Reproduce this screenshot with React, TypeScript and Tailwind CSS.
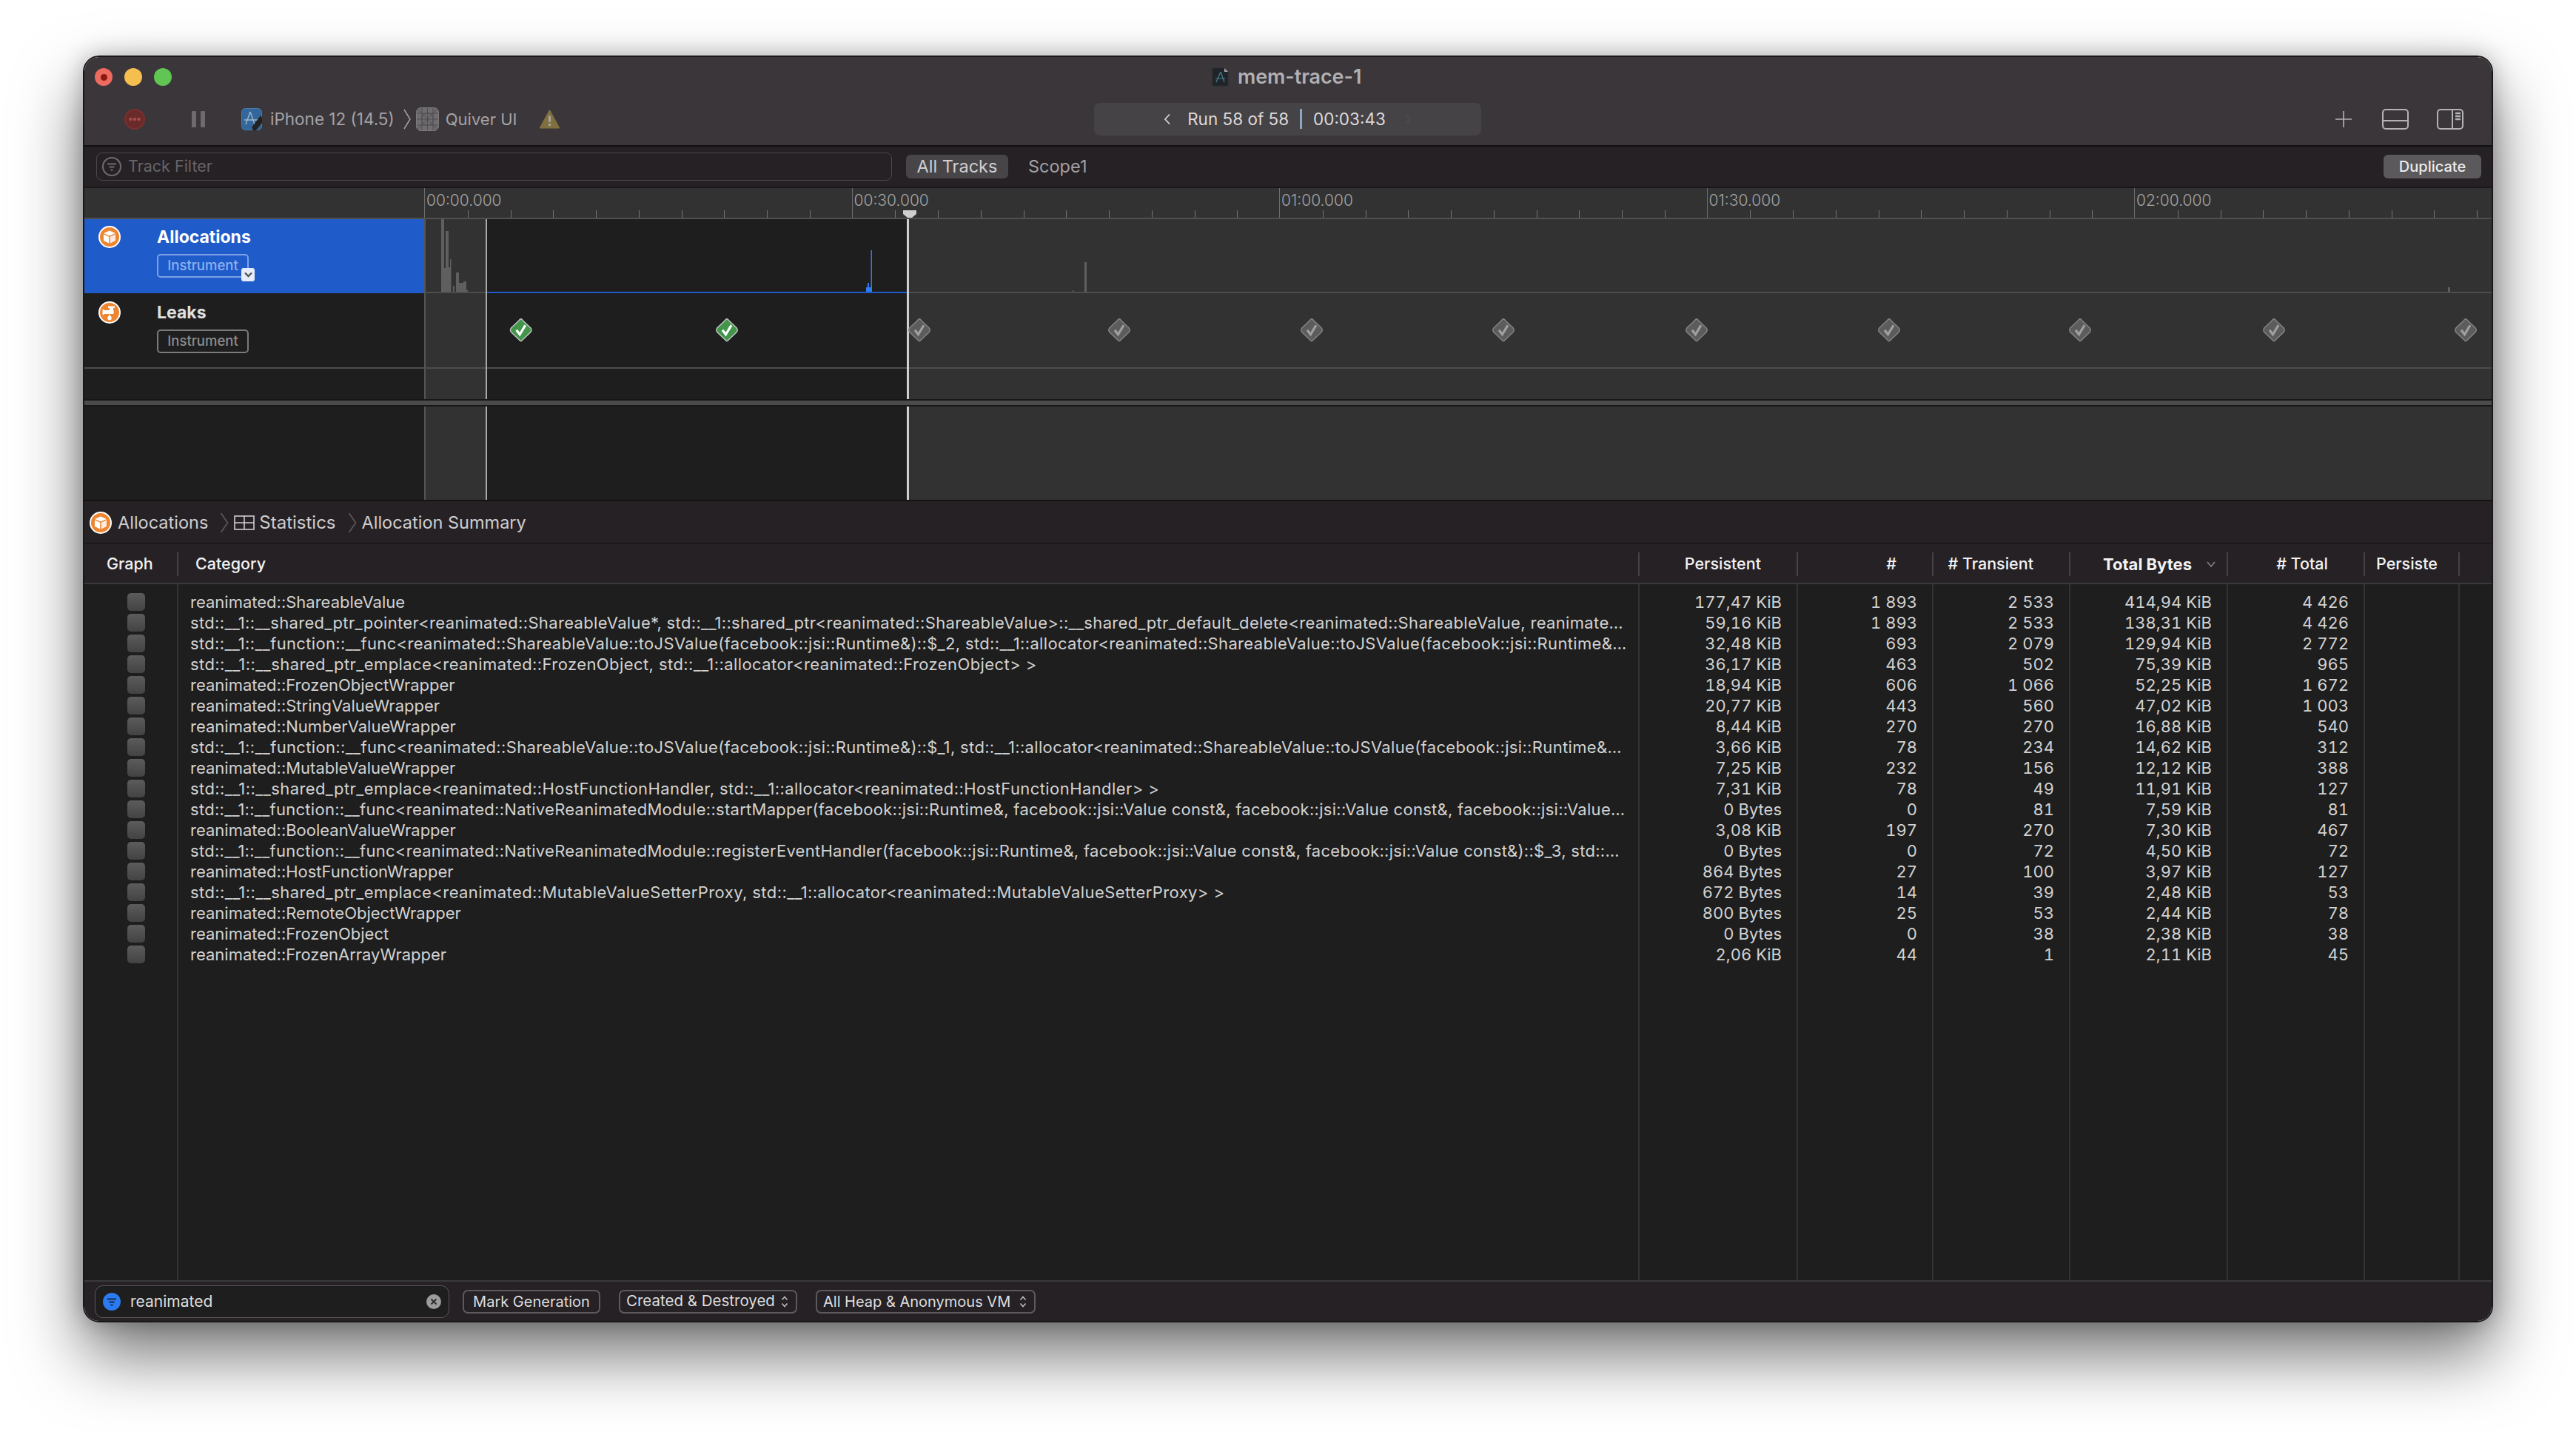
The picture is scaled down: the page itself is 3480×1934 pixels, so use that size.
import React from "react";

const rows: [string, string, string, string, string, string][] = [
  ["reanimated::ShareableValue", "177,47 KiB", "1 893", "2 533", "414,94 KiB", "4 426"],
  ["std::__1::__shared_ptr_pointer<reanimated::ShareableValue*, std::__1::shared_ptr<reanimated::ShareableValue>::__shared_ptr_default_delete<reanimated::ShareableValue, reanimate…", "59,16 KiB", "1 893", "2 533", "138,31 KiB", "4 426"],
  ["std::__1::__function::__func<reanimated::ShareableValue::toJSValue(facebook::jsi::Runtime&)::$_2, std::__1::allocator<reanimated::ShareableValue::toJSValue(facebook::jsi::Runtime&…", "32,48 KiB", "693", "2 079", "129,94 KiB", "2 772"],
  ["std::__1::__shared_ptr_emplace<reanimated::FrozenObject, std::__1::allocator<reanimated::FrozenObject> >", "36,17 KiB", "463", "502", "75,39 KiB", "965"],
  ["reanimated::FrozenObjectWrapper", "18,94 KiB", "606", "1 066", "52,25 KiB", "1 672"],
  ["reanimated::StringValueWrapper", "20,77 KiB", "443", "560", "47,02 KiB", "1 003"],
  ["reanimated::NumberValueWrapper", "8,44 KiB", "270", "270", "16,88 KiB", "540"],
  ["std::__1::__function::__func<reanimated::ShareableValue::toJSValue(facebook::jsi::Runtime&)::$_1, std::__1::allocator<reanimated::ShareableValue::toJSValue(facebook::jsi::Runtime&…", "3,66 KiB", "78", "234", "14,62 KiB", "312"],
  ["reanimated::MutableValueWrapper", "7,25 KiB", "232", "156", "12,12 KiB", "388"],
  ["std::__1::__shared_ptr_emplace<reanimated::HostFunctionHandler, std::__1::allocator<reanimated::HostFunctionHandler> >", "7,31 KiB", "78", "49", "11,91 KiB", "127"],
  ["std::__1::__function::__func<reanimated::NativeReanimatedModule::startMapper(facebook::jsi::Runtime&, facebook::jsi::Value const&, facebook::jsi::Value const&, facebook::jsi::Value…", "0 Bytes", "0", "81", "7,59 KiB", "81"],
  ["reanimated::BooleanValueWrapper", "3,08 KiB", "197", "270", "7,30 KiB", "467"],
  ["std::__1::__function::__func<reanimated::NativeReanimatedModule::registerEventHandler(facebook::jsi::Runtime&, facebook::jsi::Value const&, facebook::jsi::Value const&)::$_3, std::…", "0 Bytes", "0", "72", "4,50 KiB", "72"],
  ["reanimated::HostFunctionWrapper", "864 Bytes", "27", "100", "3,97 KiB", "127"],
  ["std::__1::__shared_ptr_emplace<reanimated::MutableValueSetterProxy, std::__1::allocator<reanimated::MutableValueSetterProxy> >", "672 Bytes", "14", "39", "2,48 KiB", "53"],
  ["reanimated::RemoteObjectWrapper", "800 Bytes", "25", "53", "2,44 KiB", "78"],
  ["reanimated::FrozenObject", "0 Bytes", "0", "38", "2,38 KiB", "38"],
  ["reanimated::FrozenArrayWrapper", "2,06 KiB", "44", "1", "2,11 KiB", "45"],
];

const numericColumns = [
  { title: "Persistent", width: "w-[214px]", index: 1 },
  { title: "#", width: "w-[183px]", index: 2 },
  { title: "# Transient", width: "w-[185px]", index: 3 },
  { title: "Total Bytes", width: "w-[213px]", index: 4, sorted: true },
  { title: "# Total", width: "w-[185px]", index: 5 },
];

const leakMarks = [703.7, 982, 1242, 1512, 1772, 2031, 2292, 2552, 2810, 3072, 3331];

const grayBars = [
  [596, 4, 296], [600, 2, 362], [602, 4, 312], [606, 2, 361], [608, 1.5, 350],
  [612, 2, 386], [616, 4, 368], [620, 6, 382], [626, 4, 380], [630, 2, 392],
  [1449, 1.5, 392], [1465, 3, 354], [3307, 3, 388],
];

// SF is wider than Inter on punctuation, so the long template names need a little spacing
function nameTracking(name: string) {
  if (name.includes("NativeReanimatedModule")) return "tracking-[0.28px]";
  if (name.includes("emplace")) return "tracking-[0.42px]";
  if (name.startsWith("std")) return "tracking-[0.34px]";
  return "";
}

function OrangeBadge({ kind }: { kind: "box" | "leak" }) {
  return (
    <svg width="30" height="30" viewBox="0 0 30 30" className="flex-none">
      <circle cx="15" cy="15" r="14" fill="#ee8530" stroke="#fff" strokeWidth="2" />
      {kind === "box" ? (
        <g fill="#fff">
          <path d="M15 6.5 L23 10 L15 13.5 L7 10 Z" />
          <path d="M7 11.5 L14.2 14.7 V23.5 L7 20 Z" />
          <path d="M23 11.5 L15.8 14.7 V23.5 L23 20 Z" fillOpacity="0.85" />
        </g>
      ) : (
        <g fill="#fff">
          <rect x="6.5" y="12" width="14" height="5" />
          <rect x="5.5" y="11" width="2" height="7" />
          <rect x="15" y="8" width="5" height="9" />
          <rect x="13" y="6.5" width="9" height="2.5" />
          <path d="M15 17.5 C16.5 20 17.8 21 17.8 22.6 A2.8 2.8 0 0 1 12.2 22.6 C12.2 21 13.5 20 15 17.5 Z" />
        </g>
      )}
    </svg>
  );
}

function BreadcrumbChevron() {
  return (
    <svg width="12" height="28" viewBox="0 0 12 28" className="flex-none" fill="none" stroke="#5c595c" strokeWidth="1.6">
      <path d="M1.5 1 L10.5 14 L1.5 27" />
    </svg>
  );
}

function SelectArrows() {
  return (
    <svg width="10" height="18" viewBox="0 0 10 18" fill="none" stroke="#bbb" strokeWidth="1.6" className="flex-none">
      <path d="M1.5 6.5 L5 2.5 L8.5 6.5" />
      <path d="M1.5 11.5 L5 15.5 L8.5 11.5" />
    </svg>
  );
}

function Toolbar() {
  return (
    <div className="h-[121px] flex-none bg-[#3a363a] border-b-2 border-[#111]">
      <div className="h-[54px] relative flex items-center">
        <div className="flex items-center gap-[16px] pl-[14px]">
          <div className="w-[24px] h-[24px] rounded-full bg-[#ec6a5e] flex items-center justify-center">
            <div className="w-[9px] h-[9px] rounded-full bg-[#8c1a12]" />
          </div>
          <div className="w-[24px] h-[24px] rounded-full bg-[#f4bf4f]" />
          <div className="w-[24px] h-[24px] rounded-full bg-[#61c554]" />
        </div>
        <div className="absolute left-[1523px] top-[13px] flex items-center gap-[12px]">
          <svg width="23" height="26" viewBox="0 0 23 26" className="flex-none">
            <path d="M1 1 H17 L22 6 V25 H1 Z" fill="#1f2429" stroke="#2a2d30" />
            <path d="M17 1 L22 6 H17 Z" fill="#a9a6a9" />
            <path d="M12 6 L6 20 M12 6 L17 20 M5 15 H18" stroke="#4b8095" strokeWidth="1.2" fill="none" />
          </svg>
          <span className="text-[27px] leading-none font-semibold text-[#b3b0b3] tracking-[-0.1px]">mem-trace-1</span>
        </div>
      </div>
      <div className="h-[60px] flex items-center">
        <div className="w-[1364px] flex-none flex items-center pl-[54px] text-[22px] text-[#a5a2a5]">
          <svg width="28" height="30" viewBox="0 0 28 30" className="flex-none">
            <circle cx="14" cy="15" r="13" fill="#6a2a2a" stroke="#7c2f2f" strokeWidth="2" />
            <circle cx="8.5" cy="15" r="2.3" fill="#a84a4a" />
            <circle cx="14" cy="15" r="2.3" fill="#a84a4a" />
            <circle cx="19.5" cy="15" r="2.3" fill="#a84a4a" />
          </svg>
          <div className="ml-[63px] flex gap-[6px] flex-none">
            <div className="w-[6px] h-[22px] rounded-[1px] bg-[#6e6b6e]" />
            <div className="w-[6px] h-[22px] rounded-[1px] bg-[#6e6b6e]" />
          </div>
          <svg width="28" height="30" viewBox="0 0 28 30" className="ml-[49px] flex-none">
            <rect x="0.5" y="0.5" width="27" height="29" rx="5" fill="#33679c" stroke="#4a7aa8" />
            <path d="M12 5 L6 22 M12 5 L18 22 M4 16 H22" stroke="#9fb6c9" strokeWidth="1.4" fill="none" />
            <path d="M14 26 L26 10 L28 13 V20 L20 30 H16 Z" fill="#222" />
          </svg>
          <span className="ml-[11px] leading-none text-[22.5px]">iPhone 12 (14.5)</span>
          <svg width="10" height="28" viewBox="0 0 10 28" fill="none" stroke="#a5a2a5" strokeWidth="1.5" className="ml-[12px] flex-none">
            <path d="M1 1 L9 14 L1 27" />
          </svg>
          <svg width="31" height="32" viewBox="0 0 31 32" className="ml-[7px] flex-none">
            <rect x="0.5" y="0.5" width="30" height="31" rx="6" fill="#6f6d6f" stroke="#7d7b7d" />
            <g stroke="#4f4d4f" strokeWidth="1" fill="none">
              <path d="M1 8 H30 M1 16 H30 M1 24 H30 M8 1 V31 M15.5 1 V31 M23 1 V31 M2 2 L29 30 M29 2 L2 30" />
              <circle cx="15.5" cy="16" r="8" />
            </g>
          </svg>
          <span className="ml-[9px] leading-none">Quiver UI</span>
          <svg width="27" height="26" viewBox="0 0 27 26" className="ml-[31px] flex-none">
            <path d="M13.5 1.5 L26 24.5 H1 Z" fill="#80703f" stroke="#80703f" strokeWidth="2" strokeLinejoin="round" />
            <rect x="12" y="8" width="3" height="9" rx="1.5" fill="#a9a6a0" />
            <circle cx="13.5" cy="20.5" r="1.8" fill="#a9a6a0" />
          </svg>
        </div>
        <div className="w-[523px] h-[44px] flex-none rounded-[8px] bg-[#464346] flex items-center justify-center text-[22.5px] text-[#dcdadc]">
          <svg width="10" height="16" viewBox="0 0 10 16" fill="none" stroke="#d5d3d5" strokeWidth="1.8" className="flex-none mr-[22px]">
            <path d="M8 1.5 L2 8 L8 14.5" />
          </svg>
          <span className="leading-none whitespace-pre">Run 58 of 58  |  00:03:43</span>
          <svg width="10" height="16" viewBox="0 0 10 16" fill="none" stroke="#4e4b4e" strokeWidth="1.8" className="flex-none ml-[25px]">
            <path d="M2 1.5 L8 8 L2 14.5" />
          </svg>
        </div>
        <div className="ml-auto flex items-center pr-[38px] gap-[40px] text-[#b5b2b5]">
          <svg width="24" height="24" viewBox="0 0 24 24" stroke="currentColor" strokeWidth="1.6" className="flex-none">
            <path d="M12 1 V23 M1 12 H23" />
          </svg>
          <svg width="36" height="28" viewBox="0 0 36 28" fill="none" stroke="currentColor" strokeWidth="2" className="flex-none">
            <rect x="1" y="1" width="34" height="26" rx="4" />
            <path d="M1 16 H35" />
          </svg>
          <svg width="36" height="28" viewBox="0 0 36 28" fill="none" stroke="currentColor" strokeWidth="2" className="flex-none -ml-[2px]">
            <rect x="1" y="1" width="34" height="26" rx="4" />
            <path d="M21 1 V27" />
            <path d="M25 6 H32 M25 10 H32 M25 14 H32" strokeWidth="2.4" />
          </svg>
        </div>
      </div>
    </div>
  );
}

function FilterRow() {
  return (
    <div className="h-[56px] flex-none bg-[#252125] border-b-2 border-[#1a181a] flex items-center pl-[16px] pr-[14px] text-[23.5px]">
      <div className="w-[1075px] h-[38px] flex-none rounded-[8px] border border-[#4b484b] flex items-center pl-[7px] gap-[9px] text-[21.5px]">
        <svg width="26" height="26" viewBox="0 0 26 26" fill="none" stroke="#6f6c6f" strokeWidth="2" className="flex-none">
          <circle cx="13" cy="13" r="12" />
          <path d="M7 9.5 H19 M9.5 13.5 H16.5 M11.5 17.5 H14.5" />
        </svg>
        <span className="leading-none text-[#676467]">Track Filter</span>
      </div>
      <div className="ml-[19px] w-[138px] h-[32px] flex-none rounded-[6px] bg-[#484548] flex items-center justify-center text-[#d0ced0] leading-none">All Tracks</div>
      <span className="ml-[27px] leading-none text-[#a3a0a3]">Scope1</span>
      <div className="ml-auto w-[132px] h-[32px] flex-none rounded-[6px] bg-[#5b595b] flex items-center justify-center text-[20px] font-medium text-[#ebebeb] leading-none">Duplicate</div>
    </div>
  );
}

function Ruler() {
  const labels = ["00:00.000", "00:30.000", "01:00.000", "01:30.000", "02:00.000"];
  return (
    <div className="h-[42px] flex-none bg-[#323232] border-b-2 border-[#505050] flex">
      <div className="w-[459px] flex-none" />
      <div className="flex-1 flex relative overflow-hidden">
        {labels.map((label) => (
          <div key={label} className="w-[577.5px] flex-none relative border-l border-[#6e6e6e] h-full">
            <span className="block pl-[2px] pt-[7px] text-[21px] leading-[20px] font-light text-[#a3a3a3]">{label}</span>
            <div className="flex absolute bottom-0 left-0">
              {Array.from({ length: 10 }).map((_, i) => (
                <div key={i} className={`w-[57.75px] h-[10px] ${i > 0 ? "border-l border-[#757575]" : ""}`} />
              ))}
            </div>
          </div>
        ))}
        <svg width="18" height="10" viewBox="0 0 18 10" className="absolute left-[647px] bottom-0">
          <path d="M0 0 H18 V5 L12 10 H6 L0 5 Z" fill="#cfcfcf" />
        </svg>
      </div>
    </div>
  );
}

// one timeline lane: sidebar, then the trimmed area, the inspection range and the rest
function Lane({ height, sidebar, children, selected }: { height: string; sidebar?: React.ReactNode; children?: React.ReactNode; selected?: boolean }) {
  return (
    <div className={`${height} flex-none flex`}>
      <div className={`w-[459px] flex-none border-b-2 ${selected ? "bg-[#1f5bc9] border-[#1f5bc9]" : "bg-[#1e1e1e] border-[#4d4d4d]"}`}>{sidebar}</div>
      <div className="flex-1 flex relative">
        <div className="w-[83px] flex-none bg-[#323232] border-l-2 border-[#555] border-b-2 border-b-[#4d4d4d]" />
        <div className="w-[2px] flex-none bg-[#a8a8a8]" />
        <div className={`w-[567px] flex-none bg-[#1e1e1e] border-b-2 ${selected ? "border-[#1f5bc9]" : "border-[#4d4d4d]"}`} />
        <div className="w-[3px] flex-none bg-[#cfcfcf]" />
        <div className="flex-1 bg-[#323232] border-b-2 border-[#4d4d4d]" />
        {children}
      </div>
    </div>
  );
}

function TrackInfo({ kind, title, pad, selected }: { kind: "box" | "leak"; title: string; pad: string; selected?: boolean }) {
  return (
    <div className={`flex pl-[19px] gap-[49px] ${pad}`}>
      <OrangeBadge kind={kind} />
      <div>
        <div className={`h-[30px] flex items-center text-[23px] font-bold ${selected ? "text-white" : "text-[#e0e0e0]"}`}>{title}</div>
        <div className={`relative mt-[8px] w-[124px] h-[32px] rounded-[5px] border-2 flex items-center justify-center text-[18.5px] font-medium ${selected ? "border-[#7ea1e6] text-[#8eb0ee]" : "border-[#7a7a7a] text-[#8c8c8c]"}`}>
          Instrument
          {selected && (
            <div className="absolute right-[-10px] bottom-[-7px] w-[18px] h-[18px] rounded-[3px] bg-[#e6ecfa] flex items-center justify-center">
              <svg width="11" height="8" viewBox="0 0 11 8" fill="none" stroke="#555" strokeWidth="2.4">
                <path d="M1 1.5 L5.5 6 L10 1.5" />
              </svg>
            </div>
          )}
        </div>
      </div>
    </div>
  );
}

function Timeline() {
  return (
    <>
      <Lane height="h-[100px]" selected sidebar={<TrackInfo kind="box" title="Allocations" pad="pt-[9px]" selected />}>
        <svg className="absolute inset-0 w-full h-full" viewBox="573 296 2793 100" preserveAspectRatio="none">
          {grayBars.map(([x, w, top]) => (
            <rect key={x} x={x} y={top} width={w} height={394 - top} fill="#5f5f5f" />
          ))}
          <rect x="1170" y="388" width="8" height="6" fill="#2f7bf0" />
          <rect x="1172" y="382" width="2" height="6" fill="#2f7bf0" />
          <rect x="1176.5" y="338" width="1.5" height="50" fill="#2f7bf0" />
        </svg>
      </Lane>
      <Lane height="h-[102px]" sidebar={<TrackInfo kind="leak" title="Leaks" pad="pt-[11px]" />}>
        <svg className="absolute inset-0 w-full h-full" viewBox="573 396 2793 102" preserveAspectRatio="none">
          {leakMarks.map((x, i) => (
            <g key={x} transform={`translate(${x} 445.7)`}>
              <path
                d="M-2.5 -13 Q0 -17 2.5 -13 L13 -3 Q15.5 0 13 3 L2.5 13 Q0 17 -2.5 13 L-13 3 Q-15.5 0 -13 -3 Z"
                fill={i < 2 ? "#41964a" : "#5c5c5c"}
                stroke={i < 2 ? "#c5c5c5" : "#858585"}
                strokeWidth="1.4"
              />
              <path d="M-6 0 L-1.5 6 L6 -6.5" fill="none" stroke={i < 2 ? "#fff" : "#a0a0a0"} strokeWidth="3.2" />
            </g>
          ))}
        </svg>
      </Lane>
      <div className="h-[41px] flex-none flex">
        <div className="w-[459px] flex-none bg-[#1e1e1e]" />
        <div className="w-[83px] flex-none bg-[#323232] border-l-2 border-[#555]" />
        <div className="w-[2px] flex-none bg-[#a8a8a8]" />
        <div className="w-[567px] flex-none bg-[#1e1e1e]" />
        <div className="w-[3px] flex-none bg-[#cfcfcf]" />
        <div className="flex-1 bg-[#323232]" />
      </div>
      <div className="h-[10px] flex-none bg-[#171717] py-[2px]">
        <div className="h-full bg-[#4b4b4b]" />
      </div>
      <div className="h-[128px] flex-none flex border-b-2 border-[#141414]">
        <div className="w-[459px] flex-none bg-[#1e1e1e]" />
        <div className="w-[83px] flex-none bg-[#323232] border-l-2 border-[#555]" />
        <div className="w-[2px] flex-none bg-[#a8a8a8]" />
        <div className="w-[567px] flex-none bg-[#1e1e1e]" />
        <div className="w-[3px] flex-none bg-[#cfcfcf]" />
        <div className="flex-1 bg-[#323232]" />
      </div>
    </>
  );
}

function Breadcrumbs() {
  return (
    <div className="h-[58px] flex-none bg-[#252125] border-b-2 border-[#1a181a] flex items-center pl-[7px] pt-[2px] text-[23.5px] text-[#cfcdcf]">
      <OrangeBadge kind="box" />
      <span className="ml-[8px] leading-none">Allocations</span>
      <span className="ml-[16px]"><BreadcrumbChevron /></span>
      <svg width="28" height="20" viewBox="0 0 28 20" fill="none" stroke="#d0ced0" strokeWidth="1.6" className="ml-[7px] flex-none">
        <rect x="1" y="1" width="26" height="18" />
        <path d="M14 1 V19 M1 10 H27" />
      </svg>
      <span className="ml-[6px] leading-none text-[24px]">Statistics</span>
      <span className="ml-[16px]"><BreadcrumbChevron /></span>
      <span className="ml-[7px] leading-none">Allocation Summary</span>
    </div>
  );
}

function TableHeader() {
  return (
    <div className="h-[54px] flex-none bg-[#252125] border-b-2 border-[#3a3a3a] flex items-center pt-[1px] text-[21.5px] font-medium text-[#f2f2f2]">
      <div className="w-[127px] h-[32px] flex-none border-r-2 border-[#444] flex items-center pl-[30px] leading-none">Graph</div>
      <div className="w-[1974px] h-[32px] flex-none border-r-2 border-[#444] flex items-center pl-[23px] leading-none">Category</div>
      {numericColumns.map((col) => (
        <div
          key={col.title}
          className={`${col.width} h-[32px] flex-none border-r-2 border-[#444] flex items-center justify-end leading-none ${col.sorted ? "pr-[15px] gap-[20px] font-bold text-[22px]" : "pr-[48px]"}`}
        >
          {col.title}
          {col.sorted && (
            <svg width="12" height="8" viewBox="0 0 12 8" fill="none" stroke="#8a8a8a" strokeWidth="1.5">
              <path d="M1 1 L6 7 L11 1" />
            </svg>
          )}
        </div>
      ))}
      <div className="w-[128px] h-[32px] flex-none border-r-2 border-[#444] flex items-center pl-[15px] leading-none overflow-hidden">Persiste</div>
    </div>
  );
}

function TableBody() {
  return (
    <div className="flex-1 min-h-0 flex bg-[#1e1e1e] text-[22px] leading-[28px] text-[#d2d2d2]">
      <div className="w-[127px] flex-none border-r-2 border-[#333] pt-[10px] pl-[14px] flex flex-col items-center">
        {rows.map((row) => (
          <div key={row[0]} className="h-[28px] flex items-center">
            <div className="w-[24px] h-[24px] rounded-[5px] bg-linear-to-b from-[#5c5c5c] to-[#434343]" />
          </div>
        ))}
      </div>
      <div className="w-[1974px] flex-none border-r-2 border-[#333] pt-[10px] pl-[16px] pr-[8px]">
        {rows.map((row) => (
          <div key={row[0]} className={`h-[28px] whitespace-nowrap ${nameTracking(row[0])}`}>{row[0]}</div>
        ))}
      </div>
      {numericColumns.map((col) => (
        <div key={col.title} className={`${col.width} flex-none border-r-2 border-[#333] pt-[10px] pr-[20px] text-right tabular-nums`}>
          {rows.map((row) => (
            <div key={row[0]} className="h-[28px] whitespace-nowrap">{row[col.index]}</div>
          ))}
        </div>
      ))}
      <div className="w-[128px] flex-none border-r-2 border-[#333]" />
    </div>
  );
}

function BottomBar() {
  return (
    <div className="h-[55px] flex-none bg-[#252125] border-t-2 border-[#3a3a3a] flex items-center pl-[14px] text-[20.5px] text-[#dedede]">
      <div className="w-[479px] h-[44px] flex-none rounded-[11px] border border-[#5a585a] bg-[#1e1e1e] flex items-center pl-[10px] pr-[10px] text-[21px]">
        <svg width="24" height="24" viewBox="0 0 24 24" className="flex-none">
          <circle cx="12" cy="12" r="12" fill="#2a7bf2" />
          <path d="M6 8.5 H18 M8.5 12.5 H15.5 M10.5 16.5 H13.5" stroke="#1c2a44" strokeWidth="2.2" />
        </svg>
        <span className="ml-[13px] leading-none">reanimated</span>
        <svg width="20" height="20" viewBox="0 0 20 20" className="ml-auto flex-none">
          <circle cx="10" cy="10" r="10" fill="#9c9c9c" />
          <path d="M6.5 6.5 L13.5 13.5 M13.5 6.5 L6.5 13.5" stroke="#2a2a2a" strokeWidth="1.8" />
        </svg>
      </div>
      <div className="ml-[18px] w-[186px] h-[32px] flex-none rounded-[7px] border-2 border-[#5c5a5c] flex items-center justify-center leading-none text-[20px]">Mark Generation</div>
      <div className="ml-[25px] w-[241px] h-[32px] flex-none rounded-[7px] border-2 border-[#5c5a5c] flex items-center justify-between pl-[8px] pr-[10px] leading-none">
        Created &amp; Destroyed
        <SelectArrows />
      </div>
      <div className="ml-[25px] w-[297px] h-[32px] flex-none rounded-[7px] border-2 border-[#5c5a5c] flex items-center justify-between pl-[8px] pr-[10px] leading-none text-[20px]">
        All Heap &amp; Anonymous VM
        <SelectArrows />
      </div>
    </div>
  );
}

export default function App() {
  return (
    <div className="w-[3480px] h-[1934px] bg-white overflow-hidden pl-[112px] pt-[75px] [font-family:Inter,sans-serif]">
      <div className="w-[3256px] h-[1711px] rounded-[22px] overflow-hidden border-2 border-[#191719] flex flex-col shadow-[0_44px_90px_rgba(0,0,0,0.55),0_0_30px_rgba(0,0,0,0.25)]">
        <Toolbar />
        <FilterRow />
        <Ruler />
        <Timeline />
        <Breadcrumbs />
        <TableHeader />
        <TableBody />
        <BottomBar />
      </div>
    </div>
  );
}
